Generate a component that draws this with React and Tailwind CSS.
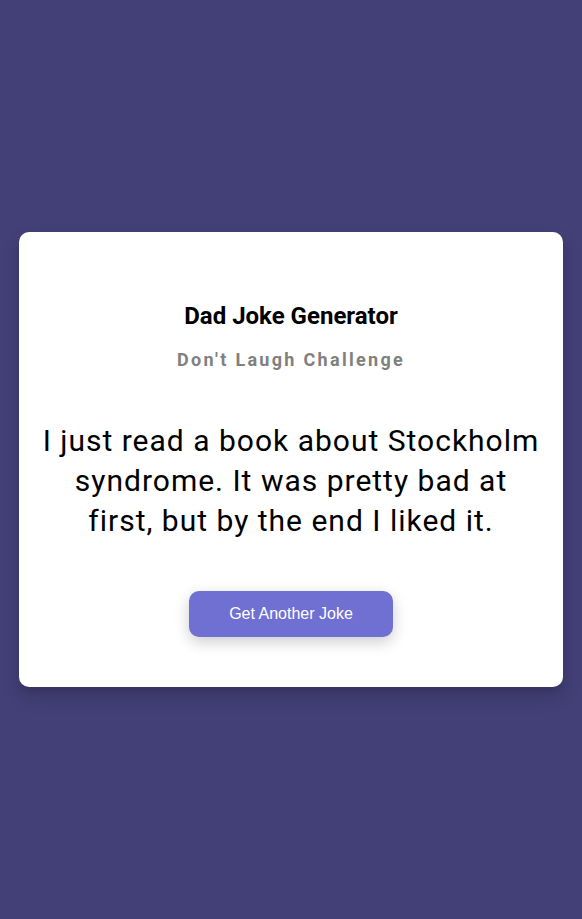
import React, { useState } from "react";

const jokes = [
  "I just read a book about Stockholm syndrome. It was pretty bad at first, but by the end I liked it.",
  "Why don't skeletons fight each other? They don't have the guts.",
  "I'm reading a book on anti-gravity. It's impossible to put down.",
];

const App = () => {
  const [index, setIndex] = useState(0);

  return (
    <div className="min-h-screen flex items-center justify-center bg-[#433f77] font-['Roboto',sans-serif]">
      {/* Card */}
      <div className="w-[544px] rounded-[10px] bg-white px-5 py-[50px] text-center shadow-[0_10px_20px_rgba(0,0,0,0.1),0_6px_6px_rgba(0,0,0,0.1)]">
        <h3 className="mt-5 text-[24px] leading-[28px] font-bold text-black">
          Dad Joke Generator
        </h3>
        <p className="mt-[18px] text-[18px] leading-[24px] font-bold tracking-[2.3px] text-[#808080]">
          Don't Laugh Challenge
        </p>

        {/* Joke */}
        <div className="mx-auto mt-[49px] mb-[50px] max-w-[520px] text-[30px] leading-[40px] tracking-[1px] text-black">
          {jokes[index]}
        </div>

        <button
          onClick={() => setIndex((i) => (i + 1) % jokes.length)}
          className="h-[46px] w-[204px] rounded-[10px] bg-[#7070d2] font-['Liberation_Sans',sans-serif] text-[16px] text-white shadow-[0_5px_15px_rgba(0,0,0,0.2)]"
        >
          Get Another Joke
        </button>
      </div>
    </div>
  );
};

export default App;
